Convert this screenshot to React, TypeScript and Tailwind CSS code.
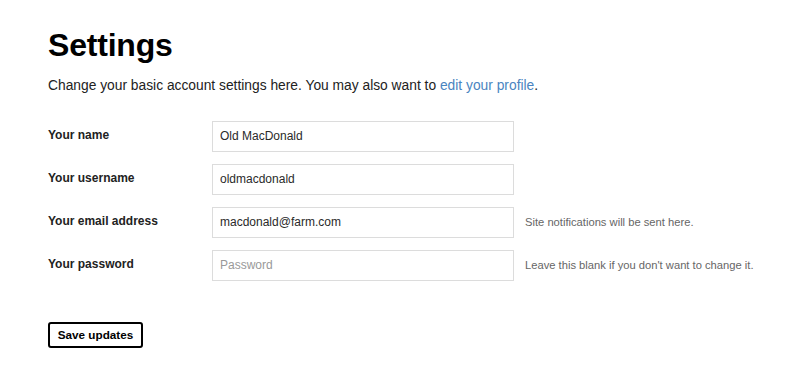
import { useState } from "react";

type Field = {
  id: string;
  label: string;
  type: string;
  value: string;
  placeholder?: string;
  help?: string;
};

const fields: Field[] = [
  { id: "name", label: "Your name", type: "text", value: "Old MacDonald" },
  { id: "username", label: "Your username", type: "text", value: "oldmacdonald" },
  {
    id: "email",
    label: "Your email address",
    type: "email",
    value: "macdonald@farm.com",
    help: "Site notifications will be sent here.",
  },
  {
    id: "password",
    label: "Your password",
    type: "password",
    value: "",
    placeholder: "Password",
    help: "Leave this blank if you don't want to change it.",
  },
];

export default function App() {
  const [values, setValues] = useState<Record<string, string>>(
    Object.fromEntries(fields.map((f) => [f.id, f.value]))
  );

  return (
    <div className="min-h-screen bg-white pl-12 pt-[29px] font-['Liberation_Sans',Arial,sans-serif] text-[#222]">
      <h1 className="text-[32px] font-bold leading-none tracking-[-0.2px] text-black">Settings</h1>
      <p className="mt-[18px] text-[13.8px] leading-none">
        Change your basic account settings here. You may also want to{" "}
        <a href="#" className="text-[#4a84c0]">edit your profile</a>.
      </p>

      <form className="mt-[28px] flex flex-col gap-3" onSubmit={(e) => e.preventDefault()}>
        {fields.map((f) => (
          <div key={f.id} className="flex items-start">
            <label htmlFor={f.id} className="w-[164px] pt-[8px] text-[12px] font-bold leading-none">
              {f.label}
            </label>
            <input
              id={f.id}
              type={f.type}
              value={values[f.id]}
              placeholder={f.placeholder}
              onChange={(e) => setValues({ ...values, [f.id]: e.target.value })}
              className="h-[31px] w-[302px] border border-[#dcdcdc] bg-white px-[7px] text-[12px] text-[#2a2a2a] outline-none placeholder:text-[#999]"
            />
            {f.help && (
              <span className="ml-[11px] self-center text-[11.2px] text-[#666]">{f.help}</span>
            )}
          </div>
        ))}

        <div className="mt-[29px]">
          <button
            type="submit"
            className="h-[26px] w-[95px] rounded-[3px] border-2 border-black bg-white text-[11.7px] font-bold text-black"
          >
            Save updates
          </button>
        </div>
      </form>
    </div>
  );
}
